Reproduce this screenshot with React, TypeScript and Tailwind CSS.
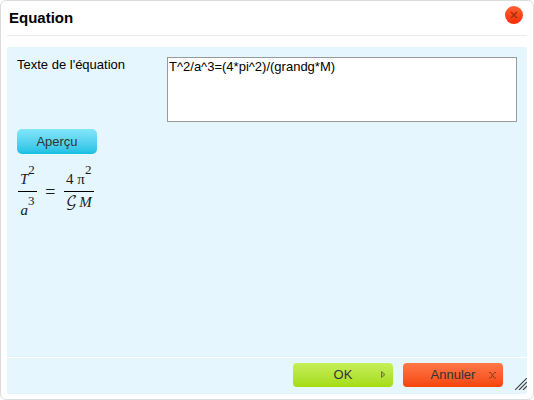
import { useState } from 'react';
import type { ReactNode } from 'react';

function Power({ base, exponent }: { base: ReactNode; exponent: string }) {
  return (
    <span className="flex items-end leading-4">
      <span>{base}</span>
      <span className="pb-[9px] text-[13px] leading-4">{exponent}</span>
    </span>
  );
}

function Fraction({ top, bottom }: { top: ReactNode; bottom: ReactNode }) {
  return (
    <div className="flex flex-col">
      <div className="flex h-7 items-end justify-center border-b border-black px-[2px] pb-1">{top}</div>
      <div className="flex h-7 items-start justify-center px-[2px] pt-px leading-4">{bottom}</div>
    </div>
  );
}

function Preview() {
  return (
    <div className="flex items-center gap-2 pl-px font-['Liberation_Serif',serif] text-[15px] text-[#1a1a1a]">
      <Fraction
        top={<Power base={<i>T</i>} exponent="2" />}
        bottom={<Power base={<i>a</i>} exponent="3" />}
      />
      <span className="w-[11px] text-center text-lg leading-4">=</span>
      <Fraction
        top={<Power base="4 π" exponent="2" />}
        bottom={
          <span className="flex gap-[2px] pt-px whitespace-nowrap">
            <span className="font-['DejaVu_Math_TeX_Gyre','DejaVu_Serif',serif] text-[15px] leading-4">𝒢</span>
            <i>M</i>
          </span>
        }
      />
    </div>
  );
}

export default function App() {
  const [text, setText] = useState('T^2/a^3=(4*pi^2)/(grandg*M)');

  return (
    <div className="flex min-h-screen flex-col rounded-md border border-[#dcdcdc] bg-white px-[6px] pb-[5px] font-['Liberation_Sans',Arial,sans-serif] text-[13px] text-black">
      <header className="mb-[11px] flex h-[35px] items-start justify-between border-b border-[#ebebeb] pr-1 pl-[2px]">
        <h1 className="pt-[7px] text-[15px] leading-5 font-bold">Equation</h1>
        <button
          type="button"
          aria-label="Fermer"
          className="mt-[5px] flex size-[18px] items-center justify-center rounded-full bg-linear-to-b from-[#ff6030] to-[#ff2600]"
        >
          <svg viewBox="0 0 8 8" className="size-2" stroke="#a83208" strokeWidth="1.6" fill="none">
            <path d="M1 1l6 6M7 1L1 7" />
          </svg>
        </button>
      </header>

      <main className="flex flex-1 flex-col rounded-xs bg-[#e5f6ff]">
        <div className="flex-1 p-[10px]">
          <div className="mb-[7px] flex items-start">
            <label htmlFor="equation" className="w-[150px] shrink-0 leading-4">
              Texte de l'équation
            </label>
            <textarea
              id="equation"
              value={text}
              onChange={(e) => setText(e.target.value)}
              className="block h-[65px] min-w-0 flex-1 resize-none border border-[#999] bg-white p-px leading-4 outline-none"
            />
          </div>
          <button
            type="button"
            className="mb-[10px] block h-[25px] w-20 rounded-[5px] bg-linear-to-b from-[#82e6fa] to-[#0fc0e4] text-[#333]"
          >
            Aperçu
          </button>
          <Preview />
        </div>

        <footer className="relative flex justify-end gap-[10px] border-t border-white pt-[5px] pr-6 pb-[7px]">
          <button
            type="button"
            className="relative h-6 w-[100px] rounded-sm bg-linear-to-b from-[#c6ef58] to-[#a4dc0c] text-[#333]"
          >
            OK
            <svg viewBox="0 0 5 7" className="absolute top-2 right-[7px] h-[7px] w-[5px]" fill="#b9b45a" stroke="#6f7a20">
              <path d="M.5.5v6L4 3.5z" />
            </svg>
          </button>
          <button
            type="button"
            className="relative h-6 w-[100px] rounded-sm bg-linear-to-b from-[#ff7846] to-[#f44404] text-[#333]"
          >
            Annuler
            <svg viewBox="0 0 7 7" className="absolute top-[9px] right-[7px] size-[7px]" stroke="#8a3c18" fill="none">
              <path d="M0 .5h1.5l4 5.5H7M7 .5H5.500l-4 5.500H0" />
            </svg>
          </button>
          <svg viewBox="0 0 12 12" className="absolute right-0 bottom-1 size-3" stroke="#444" strokeWidth="1.2">
            <path d="M0 12L12 0M4 12l8-8M8 12l4-4" />
          </svg>
        </footer>
      </main>
    </div>
  );
}
